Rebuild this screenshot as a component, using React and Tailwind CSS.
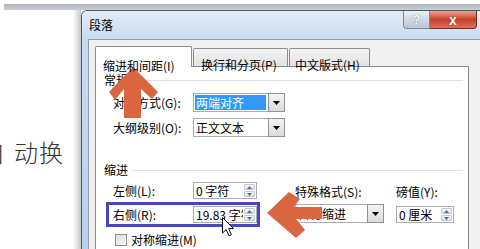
import React from "react";

const cjk = "font-['SimSun','Noto_Sans_CJK_SC',sans-serif] text-[12px] leading-[12px] text-black";

const Arrow = ({ up }) => (
  <svg width="7" height="4" viewBox="0 0 7 4">
    <polygon points={up ? "3.5,0 7,4 0,4" : "0,0 7,0 3.5,4"} fill="#000" />
  </svg>
);

const SpinTri = ({ up }) => (
  <svg width="5" height="3" viewBox="0 0 5 3">
    <polygon points={up ? "2.5,0 5,3 0,3" : "0,0 5,0 2.5,3"} fill="#5a6f92" />
  </svg>
);

const DropButton = () => (
  <div className="w-[17px] flex items-center justify-center border border-[#8e9299] bg-gradient-to-b from-[#f4f4f4] to-[#dadada] -my-px -mr-px">
    <Arrow />
  </div>
);

const Combo = ({ value, selected, className }) => (
  <div className={`flex h-[19px] border border-[#abadb3] bg-white ${className}`}>
    <div className="flex-1 flex items-center p-[1px] pr-[2px]">
      <div
        className={`h-full w-full flex items-center pl-[1px] ${
          selected ? "bg-[#3399ff]" : ""
        }`}
      >
        <span className={`${cjk} ${selected ? "text-white" : ""}`}>{value}</span>
      </div>
    </div>
    <DropButton />
  </div>
);

const Spinner = ({ value, className }) => (
  <div className={`flex h-[17px] border border-[#abadb3] bg-white ${className}`}>
    <div className="flex-1 flex items-center pl-[2px] overflow-hidden whitespace-nowrap">
      <span className={cjk}>{value}</span>
    </div>
    <div className="w-[13px] flex flex-col gap-px p-px">
      <div className="flex-1 flex items-center justify-center bg-gradient-to-b from-[#f6f7f9] to-[#dde1e8] border border-[#c4cad4] rounded-[1px]">
        <SpinTri up />
      </div>
      <div className="flex-1 flex items-center justify-center bg-gradient-to-b from-[#f6f7f9] to-[#dde1e8] border border-[#c4cad4] rounded-[1px]">
        <SpinTri />
      </div>
    </div>
  </div>
);

const SectionTitle = ({ text, className }) => (
  <div className={`flex items-center h-[12px] pl-[8px] pr-[5px] ${className}`}>
    <span className={cjk}>{text}</span>
    <div className="flex-1 h-px bg-[#dde2e8] ml-[4px]" />
  </div>
);

const App = () => {
  return (
    <div className="relative w-[480px] h-[249px] overflow-hidden bg-white">
      {/* top band */}
      <div className="h-[10px] pt-[4px] pl-[4px]">
        <div className="h-[6px] bg-gradient-to-b from-[#aeb6bf] to-[#c9ced4]" />
      </div>

      <div className="flex h-[239px]">
        {/* page text left of dialog */}
        <div className="w-[81px] flex">
          <div className="flex-1 flex items-start pt-[130px] overflow-hidden">
            <span className="shrink-0 w-[24px] -ml-[19px] font-['Noto_Sans_CJK_SC',sans-serif] text-[24px] leading-[24px] text-[#333] font-light">
              自
            </span>
            <span className="shrink-0 ml-[9px] w-[25px] font-['Noto_Sans_CJK_SC',sans-serif] text-[24px] leading-[24px] text-[#333] font-light">
              动
            </span>
            <span className="shrink-0 w-[24px] font-['Noto_Sans_CJK_SC',sans-serif] text-[24px] leading-[24px] text-[#333] font-light">
              换
            </span>
          </div>
          <div className="w-[8px] bg-gradient-to-r from-white to-[#c3c7cc]" />
        </div>

        {/* dialog */}
        <div className="flex-1 flex flex-col border-l border-t border-[#4e5864] rounded-tl-[6px] bg-[#cddcee] overflow-hidden">
          {/* title bar */}
          <div className="h-[28px] flex items-start bg-gradient-to-b from-[#e3ecf6] to-[#cadcf0]">
            <span className={`${cjk} pl-[7px] pt-[8px]`}>段落</span>
            <div className="flex-1" />
            <div className="w-[27px] h-[18px] flex items-center justify-center rounded-bl-[4px] border-x border-b border-[#7a899c] bg-gradient-to-b from-[#e9eff6] via-[#cfdae6] to-[#b8c7d8]">
              <span className="font-['Liberation_Sans',sans-serif] text-[13px] leading-[13px] font-bold text-white [text-shadow:0_0_1px_#3b4a5e]">
                ?
              </span>
            </div>
            <div className="w-[47px] h-[18px] flex items-center justify-center rounded-br-[4px] border-r border-b border-[#7a2a1e] bg-gradient-to-b from-[#eaa395] via-[#c63e27] to-[#dc705c]">
              <span className="font-['Liberation_Sans',sans-serif] text-[14px] leading-[14px] font-bold text-white [text-shadow:0_0_1px_#5a1a10]">
                x
              </span>
            </div>
            <div className="w-[3px]" />
          </div>

          {/* body */}
          <div className="flex-1 flex">
            <div className="w-[6px] bg-gradient-to-b from-[#cbdbee] to-[#b9d0ea]" />
            <div className="flex-1 flex flex-col border-l border-t border-[#8b9db5] bg-[#f0f0f0] pt-[6px] pl-[6px]">
              {/* tabs */}
              <div className="flex items-end h-[21px] relative z-10">
                <div className="w-[97px] h-[21px] bg-white border-x border-t border-[#898c95] rounded-t-[2px] pl-[7px] pt-[6px]">
                  <span className={cjk}>缩进和间距(I)</span>
                </div>
                <div className="w-[95px] h-[18px] mb-px ml-px bg-gradient-to-b from-[#f4f4f4] to-[#e2e2e2] border-x border-t border-[#898c95] rounded-t-[2px] pl-[7px] pt-[3px]">
                  <span className={cjk}>换行和分页(P)</span>
                </div>
                <div className="w-[81px] h-[18px] mb-px ml-[1px] bg-gradient-to-b from-[#f4f4f4] to-[#e2e2e2] border-x border-t border-[#898c95] rounded-t-[2px] pl-[5px] pt-[3px]">
                  <span className={cjk}>中文版式(H)</span>
                </div>
              </div>

              {/* panel */}
              <div className="w-[374px] flex-1 -mt-px bg-white border-x border-t border-[#898c95] flex flex-col">
                <SectionTitle text="常规" className="mt-[7px]" />

                <div className="flex h-[19px] mt-[7px] pl-[17px]">
                  <div className="w-[80px] flex items-center">
                    <span className={cjk}>对齐方式(G):</span>
                  </div>
                  <Combo value="两端对齐" selected className="w-[92px]" />
                </div>

                <div className="flex h-[19px] mt-[6px] pl-[17px]">
                  <div className="w-[80px] flex items-center">
                    <span className={cjk}>大纲级别(O):</span>
                  </div>
                  <Combo value="正文文本" className="w-[92px]" />
                </div>

                <SectionTitle text="缩进" className="mt-[27px]" />

                <div className="flex items-start">
                  {/* left/right indent */}
                  <div className="ml-[10px] w-[154px] flex flex-col">
                    <div className="flex h-[17px] mt-[6px] pl-[7px]">
                      <div className="w-[80px] flex items-center">
                        <span className={cjk}>左侧(L):</span>
                      </div>
                      <Spinner value="0 字符" className="w-[64px]" />
                    </div>

                    <div className="flex items-center h-[25px] mt-[3px] border-[3px] border-[#4747c4] pl-[4px]">
                      <div className="w-[80px] flex items-center">
                        <span className={cjk}>右侧(R):</span>
                      </div>
                      <Spinner value="19.83 字符" className="w-[64px]" />
                    </div>

                    <div className="flex items-center h-[12px] mt-[7px] pl-[9px]">
                      <div className="w-[12px] h-[12px] border border-[#8f8f8f] bg-gradient-to-br from-[#dcdcdc] to-[#f8f8f8]" />
                      <span className={`${cjk} ml-[4px]`}>对称缩进(M)</span>
                    </div>
                  </div>

                  {/* special format */}
                  <div className="ml-[35px] flex flex-col">
                    <span className={`${cjk} mt-[10px]`}>特殊格式(S):</span>
                    <Combo value="首行缩进" className="w-[89px] mt-[6px]" />
                  </div>

                  {/* amount */}
                  <div className="ml-[12px] flex flex-col">
                    <span className={`${cjk} mt-[10px]`}>磅值(Y):</span>
                    <Spinner value="0 厘米" className="w-[58px] mt-[8px]" />
                  </div>
                </div>
              </div>
            </div>
          </div>
        </div>
      </div>

      {/* orange annotation arrows */}
      <svg className="absolute left-0 top-0 pointer-events-none" width="480" height="249" viewBox="0 0 480 249">
        <polygon
          points="133,67 158,92 152,99 141,89 141,118 124,118 124,89 115,100 109,92"
          fill="#d9663f"
        />
        <polygon
          points="267,213 289,192 300,199 294,207 322,207 322,219 296,219 305,230 296,238"
          fill="#d9663f"
        />
      </svg>

      {/* mouse cursor */}
      <svg className="absolute left-[222px] top-[217px] pointer-events-none" width="13" height="20" viewBox="0 0 13 20">
        <path d="M0.5,0.5 L0.5,16 L4.2,12.5 L7,18.8 L9.4,17.8 L6.7,11.6 L11.5,11.6 Z" fill="#fff" stroke="#000" strokeWidth="1" />
      </svg>
    </div>
  );
};

export default App;
